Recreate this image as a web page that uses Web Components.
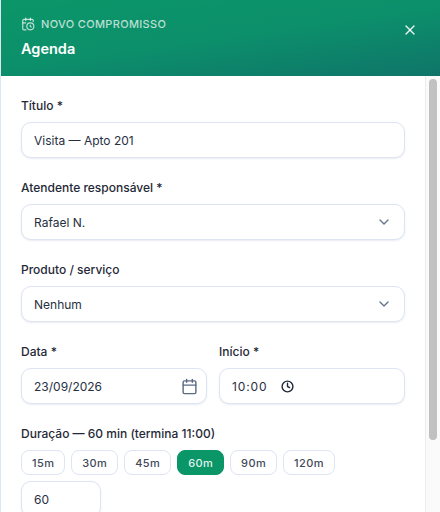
<!DOCTYPE html>
<html lang="pt-BR">
<head>
<meta charset="utf-8">
<title>Agenda</title>
<style>
  html, body { margin: 0; height: 100%; overflow: hidden; background: #fff; }
  body { font-family: Inter, "Liberation Sans", sans-serif; }
</style>
</head>
<body>
<agenda-dialog>
  <form-field label="Título *"><text-box>Visita — Apto 201</text-box></form-field>
  <form-field label="Atendente responsável *"><text-box icon="chevron">Rafael N.</text-box></form-field>
  <form-field label="Produto / serviço"><text-box icon="chevron">Nenhum</text-box></form-field>
  <field-row>
    <form-field label="Data *"><text-box icon="calendar">23/09/2026</text-box></form-field>
    <form-field label="Início *"><text-box icon="clock">10:00</text-box></form-field>
  </field-row>
  <form-field label="Duração — 60 min (termina 11:00)">
    <chip-row>
      <duration-chip>15m</duration-chip>
      <duration-chip>30m</duration-chip>
      <duration-chip>45m</duration-chip>
      <duration-chip active>60m</duration-chip>
      <duration-chip>90m</duration-chip>
      <duration-chip>120m</duration-chip>
    </chip-row>
    <text-box short>60</text-box>
  </form-field>
</agenda-dialog>

<script>
const ICONS = {
  chevron: '<svg width="16" height="16" viewBox="0 0 24 24" fill="none" stroke="#64748b" stroke-width="2" stroke-linecap="round" stroke-linejoin="round"><path d="m6 9 6 6 6-6"/></svg>',
  calendar: '<svg width="17" height="17" viewBox="0 0 24 24" fill="none" stroke="#5b6b84" stroke-width="2" stroke-linecap="round" stroke-linejoin="round"><path d="M8 2v4"/><path d="M16 2v4"/><rect x="3" y="4" width="18" height="18" rx="2"/><path d="M3 10h18"/></svg>',
  clock: '<svg width="13" height="13" viewBox="0 0 24 24" fill="none" stroke="#1f2937" stroke-width="2.6" stroke-linecap="round" stroke-linejoin="round"><circle cx="12" cy="12" r="10"/><path d="M12 6v6l4 2"/></svg>'
};

class AgendaDialog extends HTMLElement {
  constructor() {
    super();
    this.root = this.attachShadow({mode: 'open'});
  }

  connectedCallback() {
    this.root.innerHTML = `
      <style>
        :host {
          display: flex;
          flex-direction: column;
          height: 512px;
          box-sizing: border-box;
          border-left: 1px solid #dfe6f3;
          background: #fff;
        }
        header {
          flex: none;
          height: 76px;
          box-sizing: border-box;
          padding: 16px 20px 0;
          display: flex;
          justify-content: space-between;
          color: #fff;
          background: linear-gradient(172deg, #0b9668 0%, #0c8f6b 50%, #0f7569 100%);
        }
        .eyebrow {
          display: flex;
          align-items: center;
          gap: 6px;
          font-size: 11px;
          font-weight: 500;
          letter-spacing: .33px;
          line-height: 16px;
          color: rgba(255, 255, 255, .72);
        }
        h2 {
          margin: 7px 0 0;
          font-size: 14.5px;
          font-weight: 600;
          line-height: 20px;
        }
        .close {
          margin: 6px 2px 0 0;
          width: 16px;
          height: 16px;
        }
        .body {
          flex: 1;
          min-height: 0;
          display: flex;
        }
        main {
          flex: 1;
          min-width: 0;
          overflow: hidden;
          padding: 21px 20px 20px;
          display: flex;
          flex-direction: column;
          gap: 21px;
        }
      </style>
      <header>
        <div>
          <div class="eyebrow">
            <svg width="14" height="14" viewBox="0 0 24 24" fill="none" stroke="currentColor" stroke-width="2" stroke-linecap="round" stroke-linejoin="round"><path d="M16 2v4"/><path d="M8 2v4"/><path d="M21 7.5V6a2 2 0 0 0-2-2H5a2 2 0 0 0-2 2v14a2 2 0 0 0 2 2h3.5"/><path d="M3 10h5"/><path d="M16 14v2.2l1.6 1"/><circle cx="16" cy="16" r="6"/></svg>
            <span>NOVO COMPROMISSO</span>
          </div>
          <h2>Agenda</h2>
        </div>
        <svg class="close" viewBox="0 0 24 24" fill="none" stroke="#fff" stroke-opacity=".9" stroke-width="2" stroke-linecap="round"><path d="M18 6 6 18"/><path d="m6 6 12 12"/></svg>
      </header>
      <div class="body">
        <main><slot></slot></main>
        <scroll-track></scroll-track>
      </div>
    `;
  }
}
customElements.define('agenda-dialog', AgendaDialog);

// headless browser hides native scrollbars, so it is drawn
class ScrollTrack extends HTMLElement {
  constructor() {
    super();
    this.root = this.attachShadow({mode: 'open'});
  }

  connectedCallback() {
    this.root.innerHTML = `
      <style>
        :host {
          display: block;
          flex: none;
          width: 15px;
          box-sizing: border-box;
          padding: 3px 3px 0 3px;
          border-left: 1px solid #ececec;
          background: #fafafa;
        }
        div {
          height: 361px;
          border-radius: 4px;
          background: #c1c1c1;
        }
      </style>
      <div></div>
    `;
  }
}
customElements.define('scroll-track', ScrollTrack);

class FormField extends HTMLElement {
  constructor() {
    super();
    this.root = this.attachShadow({mode: 'open'});
  }

  connectedCallback() {
    this.root.innerHTML = `
      <style>
        :host {
          display: block;
          flex: 1;
          min-width: 0;
        }
        label {
          display: block;
          margin-bottom: 7px;
          font-size: 12px;
          font-weight: 500;
          line-height: 18px;
          color: #1f2937;
        }
      </style>
      <label>${this.getAttribute('label')}</label>
      <slot></slot>
    `;
  }
}
customElements.define('form-field', FormField);

class FieldRow extends HTMLElement {
  constructor() {
    super();
    this.root = this.attachShadow({mode: 'open'});
  }

  connectedCallback() {
    this.root.innerHTML = `
      <style>
        :host {
          display: flex;
          gap: 12px;
        }
      </style>
      <slot></slot>
    `;
  }
}
customElements.define('field-row', FieldRow);

class TextBox extends HTMLElement {
  constructor() {
    super();
    this.root = this.attachShadow({mode: 'open'});
  }

  connectedCallback() {
    const icon = this.getAttribute('icon');
    this.root.innerHTML = `
      <style>
        :host {
          display: flex;
          align-items: center;
          justify-content: space-between;
          box-sizing: border-box;
          height: 36px;
          padding: 0 12px;
          border: 1px solid #dde4f2;
          border-radius: 10px;
          background: #fff;
          box-shadow: 0 1px 2px rgba(100, 116, 139, .14);
          font-size: 12px;
          color: #27303f;
        }
        :host([icon="calendar"]) { padding-right: 8px; }
        :host([icon="clock"]) {
          justify-content: flex-start;
          gap: 13px;
          letter-spacing: .9px;
        }
        :host([short]) { width: 80px; margin-top: 6px; }
        svg { display: block; flex: none; }
      </style>
      <slot></slot>${icon ? ICONS[icon] : ''}
    `;
  }
}
customElements.define('text-box', TextBox);

class ChipRow extends HTMLElement {
  constructor() {
    super();
    this.root = this.attachShadow({mode: 'open'});
  }

  connectedCallback() {
    this.root.innerHTML = `
      <style>
        :host {
          display: flex;
          gap: 6px;
        }
      </style>
      <slot></slot>
    `;
  }
}
customElements.define('chip-row', ChipRow);

class DurationChip extends HTMLElement {
  constructor() {
    super();
    this.root = this.attachShadow({mode: 'open'});
  }

  connectedCallback() {
    this.root.innerHTML = `
      <style>
        :host {
          display: flex;
          align-items: center;
          box-sizing: border-box;
          height: 25px;
          padding: 0 10px;
          border: 1px solid #dde4f2;
          border-radius: 8px;
          background: #fff;
          font-size: 11px;
          font-weight: 500;
          letter-spacing: .38px;
          color: #3f4a5a;
        }
        :host([active]) {
          background: #0b9668;
          border-color: #0b9668;
          color: rgba(255, 255, 255, .9);
        }
      </style>
      <slot></slot>
    `;
  }
}
customElements.define('duration-chip', DurationChip);
</script>
</body>
</html>
